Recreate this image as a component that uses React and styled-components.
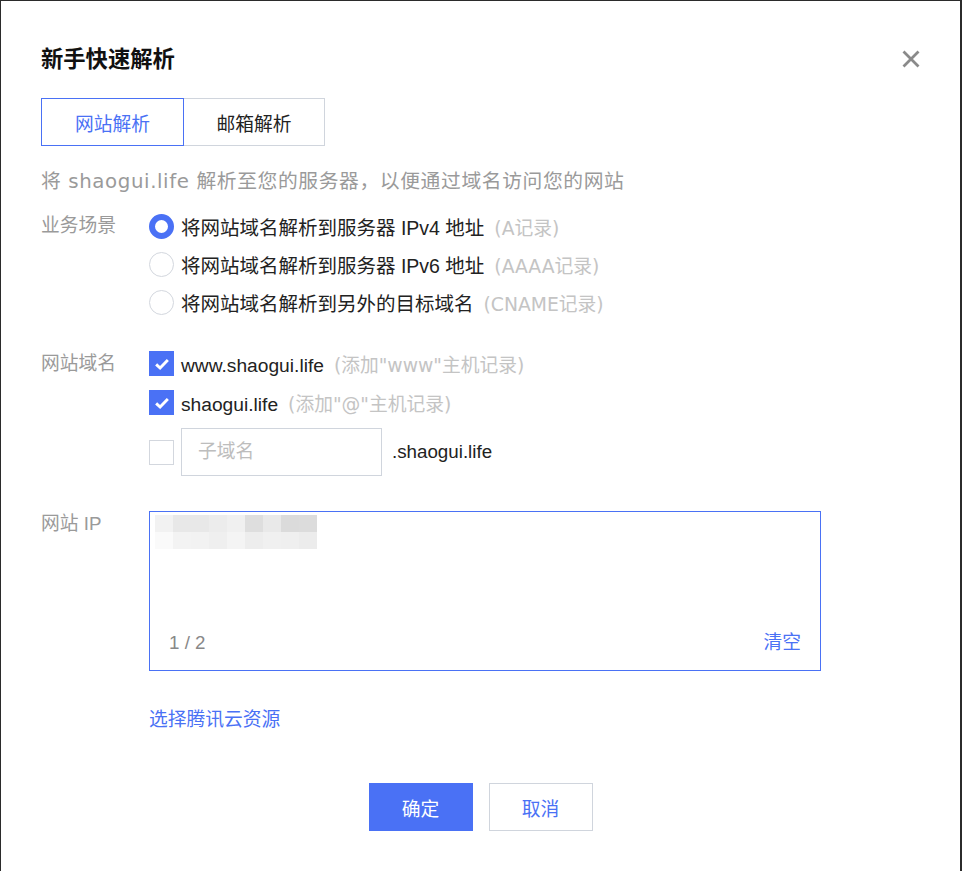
import React from 'react';
import styled, {createGlobalStyle} from 'styled-components';

const Global = createGlobalStyle`
    body {
        margin: 0;
        background: #ffffff;
        font-family: "Liberation Sans", "Noto Sans CJK SC", sans-serif;
    }
`;

const BLUE = '#4a71f5';

const Dialog = styled.div`
    box-sizing: border-box;
    width: 962px;
    min-height: 871px;
    background: #ffffff;
    border-top: 1px solid #2b2b2b;
    border-left: 1px solid #2b2b2b;
    border-right: 2px solid #2b2b2b;
    padding: 0 40px;
    font-size: 18.75px;
    color: #222222;
`;

const Header = styled.div`
    display: flex;
    align-items: center;
    justify-content: space-between;
    padding-top: 44px;
    height: 30px;
`;

const Title = styled.h2`
    margin: 0;
    font-size: 22.3px;
    font-weight: bold;
    line-height: 30px;
    color: #111111;
`;

const Close = styled.button`
    border: 0;
    background: none;
    padding: 0;
    width: 18px;
    height: 18px;
    display: flex;
    margin-top: -3px;
    cursor: pointer;
`;

const Tabs = styled.div`
    display: flex;
    margin-top: 23px;
`;

const Tab = styled.div`
    box-sizing: border-box;
    width: ${p => p.active ? '143px' : '142px'};
    height: 48px;
    margin-left: ${p => p.active ? '0' : '-1px'};
    border: 1px solid ${p => p.active ? BLUE : '#d0d5dd'};
    position: relative;
    z-index: ${p => p.active ? 1 : 0};
    display: flex;
    align-items: center;
    justify-content: center;
    color: ${p => p.active ? BLUE : '#222222'};
`;

const Desc = styled.p`
    margin: 22px 0 0;
    line-height: 28px;
    font-family: "DejaVu Sans", "Noto Sans CJK SC", sans-serif;
    font-size: 19.8px;
    letter-spacing: 0.6px;
    color: #9a9a9a;
`;

const FormRow = styled.div`
    display: flex;
    margin-top: ${p => p.gap}px;
`;

const Label = styled.div`
    width: 108px;
    flex: none;
    color: #9a9a9a;
    line-height: ${p => p.lh}px;
`;

const Options = styled.div`
    display: flex;
    flex-direction: column;
`;

const Option = styled.label`
    display: flex;
    align-items: center;
    height: ${p => p.h}px;
    gap: 7px;
`;

const OptionText = styled.span`
    font-size: ${p => p.size}px;
`;

const Radio = styled.span`
    box-sizing: border-box;
    width: 25px;
    height: 25px;
    border-radius: 50%;
    border: ${p => p.checked ? `6px solid ${BLUE}` : '1px solid #d3d7de'};
    background: #ffffff;
    flex: none;
`;

const Box = styled.span`
    box-sizing: border-box;
    width: 25px;
    height: 25px;
    flex: none;
    display: flex;
    align-items: center;
    justify-content: center;
    background: ${p => p.checked ? BLUE : '#ffffff'};
    border: 1px solid ${p => p.checked ? BLUE : '#d3d7de'};
`;

const Hint = styled.span`
    font-family: "DejaVu Sans", "Noto Sans CJK SC", sans-serif;
    font-size: 18.75px;
    color: #c4c4c4;
    margin-left: 10px;
`;

const Input = styled.input`
    box-sizing: border-box;
    width: 201px;
    height: 48px;
    border: 1px solid #d0d5dd;
    padding: 0 16px;
    font: inherit;
    color: #222222;
    outline: none;
    &::placeholder { color: #bdbdbd; }
`;

const Suffix = styled.span`
    margin-left: 3px;
`;

const TextArea = styled.div`
    box-sizing: border-box;
    width: 672px;
    height: 160px;
    border: 1px solid ${BLUE};
    display: flex;
    flex-direction: column;
    justify-content: space-between;
    padding: 3px 0 15px;
`;

const Blur = styled.div`
    display: grid;
    grid-template-columns: repeat(9, 18px);
    grid-auto-rows: 17px;
    margin-left: 5px;
`;

const Cell = styled.span`
    background: ${p => p.c};
`;

const AreaFoot = styled.div`
    display: flex;
    justify-content: space-between;
    padding: 0 19px;
    line-height: 24px;
`;

const Count = styled.span`
    color: #888888;
`;

const LinkText = styled.a`
    color: ${BLUE};
    text-decoration: none;
    cursor: pointer;
`;

const ResLink = styled.div`
    margin: 35px 0 0 108px;
    line-height: 28px;
`;

const Footer = styled.div`
    display: flex;
    justify-content: center;
    gap: 16px;
    margin-top: 49px;
`;

const Button = styled.button`
    box-sizing: border-box;
    width: 104px;
    height: 48px;
    font: inherit;
    cursor: pointer;
    border: 1px solid ${p => p.primary ? BLUE : '#d0d5dd'};
    background: ${p => p.primary ? BLUE : '#ffffff'};
    color: ${p => p.primary ? '#ffffff' : BLUE};
`;

const Check = () => (
    <svg width="18" height="18" viewBox="0 0 16 16">
        <path d="M2.8 8.3l3.5 3.3L13.2 4.4" fill="none" stroke="#fff" strokeWidth="2.6"/>
    </svg>
);

const topCells = ['#f2f2f2', '#e8e8e8', '#e8e8e8', '#ececec', '#f0f0f0', '#dedede', '#e9e9e9', '#dbdbdb', '#dcdcdc'];
const bottomCells = ['#fafafa', '#f3f3f3', '#f2f2f2', '#efefef', '#f4f4f4', '#ededed', '#f0f0f0', '#efefef', '#ececec'];

const scenes = [
    {text: '将网站域名解析到服务器 IPv4 地址', hint: '(A记录)', checked: true},
    {text: '将网站域名解析到服务器 IPv6 地址', hint: '(AAAA记录)'},
    {text: '将网站域名解析到另外的目标域名', hint: '(CNAME记录)'},
];

export default function App() {
    return (
        <Dialog>
            <Global/>
            <Header>
                <Title>新手快速解析</Title>
                <Close aria-label="close">
                    <svg width="18" height="18" viewBox="0 0 18 18">
                        <path d="M1.5 1.5l15 15M16.5 1.5l-15 15" stroke="#8a8a8a" strokeWidth="2.8"/>
                    </svg>
                </Close>
            </Header>
            <Tabs>
                <Tab active>网站解析</Tab>
                <Tab>邮箱解析</Tab>
            </Tabs>
            <Desc>将 shaogui.life 解析至您的服务器，以便通过域名访问您的网站</Desc>

            <FormRow gap={11}>
                <Label lh={38}>业务场景</Label>
                <Options>
                    {scenes.map(s => (
                        <Option h={38} key={s.text}>
                            <Radio checked={s.checked}/>
                            <OptionText size={19.5}>{s.text}<Hint>{s.hint}</Hint></OptionText>
                        </Option>
                    ))}
                </Options>
            </FormRow>

            <FormRow gap={23}>
                <Label lh={39}>网站域名</Label>
                <Options>
                    <Option h={39}>
                        <Box checked><Check/></Box>
                        <OptionText size={19.2}>www.shaogui.life<Hint>(添加"www"主机记录)</Hint></OptionText>
                    </Option>
                    <Option h={39}>
                        <Box checked><Check/></Box>
                        <OptionText size={19.2}>shaogui.life<Hint>(添加"@"主机记录)</Hint></OptionText>
                    </Option>
                    <Option h={48} style={{marginTop: 6}}>
                        <Box/>
                        <Input placeholder="子域名"/>
                        <Suffix>.shaogui.life</Suffix>
                    </Option>
                </Options>
            </FormRow>

            <FormRow gap={35}>
                <Label lh={26}>网站 IP</Label>
                <TextArea>
                    <Blur>
                        {topCells.concat(bottomCells).map((c, i) => <Cell c={c} key={i}/>)}
                    </Blur>
                    <AreaFoot>
                        <Count>1 / 2</Count>
                        <LinkText>清空</LinkText>
                    </AreaFoot>
                </TextArea>
            </FormRow>

            <ResLink><LinkText>选择腾讯云资源</LinkText></ResLink>

            <Footer>
                <Button primary>确定</Button>
                <Button>取消</Button>
            </Footer>
        </Dialog>
    );
}
